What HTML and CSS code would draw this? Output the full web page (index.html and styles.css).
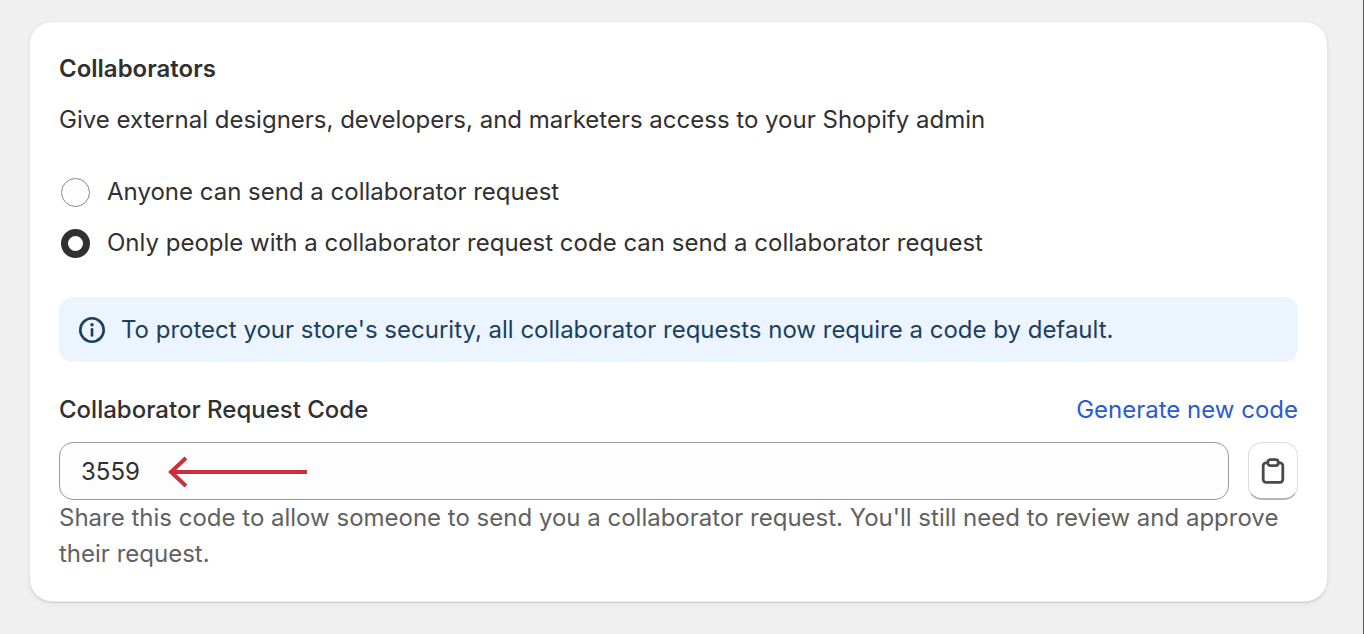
FILE: index.html
```html
<!DOCTYPE html>
<html lang="en">
<head>
<meta charset="utf-8">
<title>Collaborators</title>
<link rel="stylesheet" href="styles.css">
</head>
<body>
<main class="page">
<section class="card">
  <h2 class="title">Collaborators</h2>
  <p class="intro">Give external designers, developers, and marketers access to your Shopify admin</p>

  <div class="choices">
    <div class="choice">
      <input type="radio" name="access" id="access-anyone">
      <label for="access-anyone">Anyone can send a collaborator request</label>
    </div>
    <div class="choice">
      <input type="radio" name="access" id="access-code" checked>
      <label for="access-code">Only people with a collaborator request code can send a collaborator request</label>
    </div>
  </div>

  <div class="banner">
    <svg class="icon" viewBox="0 0 28 28" aria-hidden="true">
      <circle cx="14" cy="14" r="11.7" fill="none" stroke="currentColor" stroke-width="2.6"/>
      <circle cx="14" cy="8.8" r="1.7" fill="currentColor"/>
      <path d="M14 13.2v6.2" fill="none" stroke="currentColor" stroke-width="2.6" stroke-linecap="round"/>
    </svg>
    <p>To protect your store's security, all collaborator requests now require a code by default.</p>
  </div>

  <div class="code-head">
    <label class="label" for="code">Collaborator Request Code</label>
    <a class="link" href="#">Generate new code</a>
  </div>
  <div class="code-row">
    <div class="field">
      <input class="code" type="text" id="code" value="3559">
      <svg class="arrow" viewBox="0 0 140 32" aria-hidden="true">
        <path d="M139 16H3M18 2L3 16L18 30" fill="none" stroke="currentColor" stroke-width="4"/>
      </svg>
    </div>
    <button class="copy" type="button" aria-label="Copy code">
      <svg viewBox="0 0 24 28" aria-hidden="true">
        <path d="M6.5 5.8H5a2.8 2.8 0 0 0-2.8 2.8v14A2.8 2.8 0 0 0 5 25.4h14a2.8 2.8 0 0 0 2.8-2.8v-14A2.8 2.8 0 0 0 19 5.8h-1.5" fill="none" stroke="currentColor" stroke-width="2.8"/>
        <rect x="6.8" y="2.6" width="10.4" height="6" rx="2.6" fill="none" stroke="currentColor" stroke-width="2.8"/>
      </svg>
    </button>
  </div>
  <p class="help">Share this code to allow someone to send you a collaborator request. You'll still need to review and approve their request.</p>
</section>
</main>
</body>
</html>
```

FILE: styles.css
```css
* { box-sizing: border-box; }

body { margin: 0; background: #f0f0f0; color: #303030; font: 24px/36px Inter, sans-serif; }

h2, p { margin: 0; }

.page { min-height: 100vh; padding: 22px 36px 32px 30px; border-right: 1px solid #5c5c5c; }
.card { padding: 29px; background: #fff; border-radius: 22px; box-shadow: 0 0 0 1px #e6e6e6, 0 1px 1px 1px rgba(0, 0, 0, .1), 0 3px 6px rgba(0, 0, 0, .06); }

.title { font-size: 24px; font-weight: 600; }
.label { font-weight: 550; }
.intro { margin-top: 15px; }

.choices { display: flex; flex-direction: column; gap: 15px; margin-top: 36px; }
.choice { display: flex; align-items: center; gap: 17px; }
.choice input { appearance: none; width: 29px; height: 29px; margin: 0 0 0 2px; border: 1px solid #8a8a8a; border-radius: 50%; background: #fdfdfd; }
.choice input:checked { border: 7px solid #303030; background: #fff; }

.banner { display: flex; align-items: center; gap: 15px; margin-top: 36px; padding: 15px 19px 14px; border-radius: 14px; background: #ebf4ff; color: #1a3f60; }
.icon { flex: none; width: 28px; height: 28px; }

.code-head { display: flex; justify-content: space-between; margin-top: 30px; }
.link { color: #2a5bd0; text-decoration: none; }

.code-row { display: flex; gap: 19px; margin-top: 14px; }
.field { position: relative; flex: 1; }
.code { display: block; width: 100%; height: 58px; padding: 0 21px; border: 1px solid #9a9a9a; border-radius: 14px; background: #fdfdfd; color: inherit; font: inherit; }
.arrow { position: absolute; left: 109px; top: 14px; width: 140px; height: 32px; color: #c8313c; }

.copy { display: flex; align-items: center; justify-content: center; width: 50px; height: 58px; padding: 0; border: 1px solid #ddd; border-bottom: 2px solid #b5b5b5; border-radius: 14px; background: #fff; color: #4a4a4a; }
.copy svg { width: 24px; height: 28px; }

.help { color: #616161; }
```
